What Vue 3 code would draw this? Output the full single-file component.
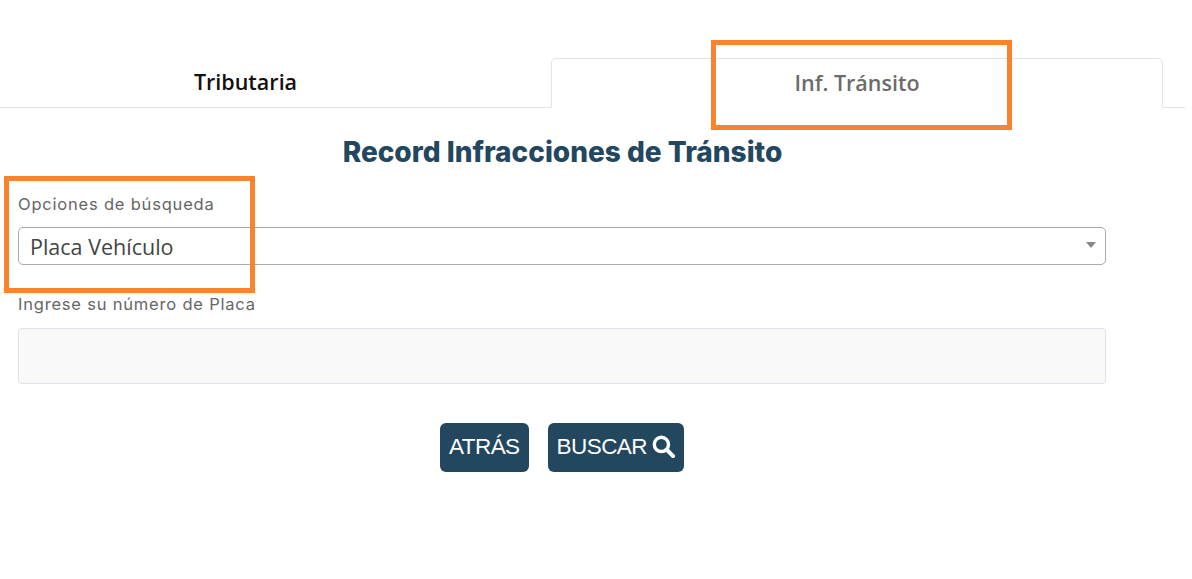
<template>
  <div class="pagina">
    <ul class="tabs">
      <li class="tab primera">Tributaria</li>
      <li class="tab activa">Inf. Tránsito</li>
    </ul>

    <h2 class="titulo">Record Infracciones de Tránsito</h2>

    <form class="formulario" @submit.prevent>
      <label class="etiqueta">Opciones de búsqueda</label>
      <div class="selector">
        <span>{{ opcion }}</span>
        <i class="flecha"></i>
      </div>

      <label class="etiqueta segunda">Ingrese su número de Placa</label>
      <input class="campo" type="text" v-model="placa" />

      <div class="botones">
        <button class="boton" type="button">ATRÁS</button>
        <button class="boton" type="submit">
          BUSCAR
          <svg class="lupa" viewBox="0 0 24 24" aria-hidden="true">
            <circle cx="9.8" cy="9.8" r="7.4" fill="none" stroke="#fff" stroke-width="3.6" />
            <path d="M15.4 15.4 L22 22" stroke="#fff" stroke-width="4.2" stroke-linecap="round" />
          </svg>
        </button>
      </div>
    </form>

    <!-- recuadros naranjas de la captura -->
    <div class="marca marca-tab"></div>
    <div class="marca marca-opciones"></div>
  </div>
</template>

<script setup>
import { ref } from 'vue'

const opcion = ref('Placa Vehículo')
const placa = ref('')
</script>

<style>
body {
  background: #fff;
}
</style>

<style scoped>
.pagina {
  position: relative;
  width: 1192px;
  height: 579px;
  overflow: hidden;
  background: #fff;
  padding-top: 58px;
  box-sizing: border-box;
}

.tabs {
  display: flex;
  list-style: none;
  margin: 0;
  padding: 0;
  width: 1185px;
  height: 50px;
  box-sizing: border-box;
  border-bottom: 1px solid #e3e3e3;
}

.tab {
  height: 50px;
  box-sizing: border-box;
  text-align: center;
  font-family: "Open Sans", sans-serif;
  font-size: 21.5px;
  font-weight: 600;
  line-height: 48px;
  color: #111;
}

.primera {
  width: 491px;
  margin-right: 60px;
}

.activa {
  width: 612px;
  color: #6c6c6c;
  background: #fff;
  border: 1px solid #e3e3e3;
  border-bottom-color: #fff;
  border-radius: 5px 5px 0 0;
}

.titulo {
  margin: 25px 0 0;
  text-align: center;
  width: 1125px;
  font-family: "Inter", sans-serif;
  font-size: 28px;
  font-weight: 800;
  line-height: 38px;
  color: #22475f;
}

.formulario {
  width: 1088px;
  margin: 0 0 0 18px;
  padding-top: 22px;
}

.etiqueta {
  display: block;
  font-family: "Inter", sans-serif;
  font-size: 16.5px;
  letter-spacing: 0.8px;
  line-height: 22px;
  color: #666;
}

.selector {
  display: flex;
  align-items: center;
  justify-content: space-between;
  margin-top: 12px;
  height: 38px;
  box-sizing: border-box;
  padding: 0 9px 0 11px;
  border: 1px solid #aaa;
  border-radius: 5px;
  font-family: "Open Sans", sans-serif;
  font-size: 21.5px;
  color: #444;
}

.flecha {
  width: 0;
  height: 0;
  border-left: 5px solid transparent;
  border-right: 5px solid transparent;
  border-top: 6px solid #888;
  margin-top: -2px;
}

.segunda {
  margin-top: 28px;
}

.campo {
  display: block;
  width: 100%;
  height: 56px;
  margin-top: 13px;
  box-sizing: border-box;
  background: #f9f9f9;
  border: 1px solid #e0e0e8;
  border-radius: 4px;
  outline: none;
}

.botones {
  display: flex;
  justify-content: center;
  gap: 19px;
  margin-top: 39px;
}

.boton {
  display: flex;
  align-items: center;
  height: 49px;
  padding: 0 9px 2px;
  border: none;
  border-radius: 6px;
  background: #22475f;
  color: #fff;
  font-family: "Liberation Sans", sans-serif;
  font-size: 22.5px;
  letter-spacing: -0.55px;
  white-space: nowrap;
}

.lupa {
  width: 23px;
  height: 23px;
  margin-left: 5px;
  margin-top: -1px;
}

.marca {
  position: absolute;
  box-sizing: border-box;
  border: 5px solid #fb832e;
  pointer-events: none;
}

.marca-tab {
  left: 711px;
  top: 40px;
  width: 301px;
  height: 90px;
}

.marca-opciones {
  left: 4px;
  top: 176px;
  width: 251px;
  height: 117px;
}
</style>
